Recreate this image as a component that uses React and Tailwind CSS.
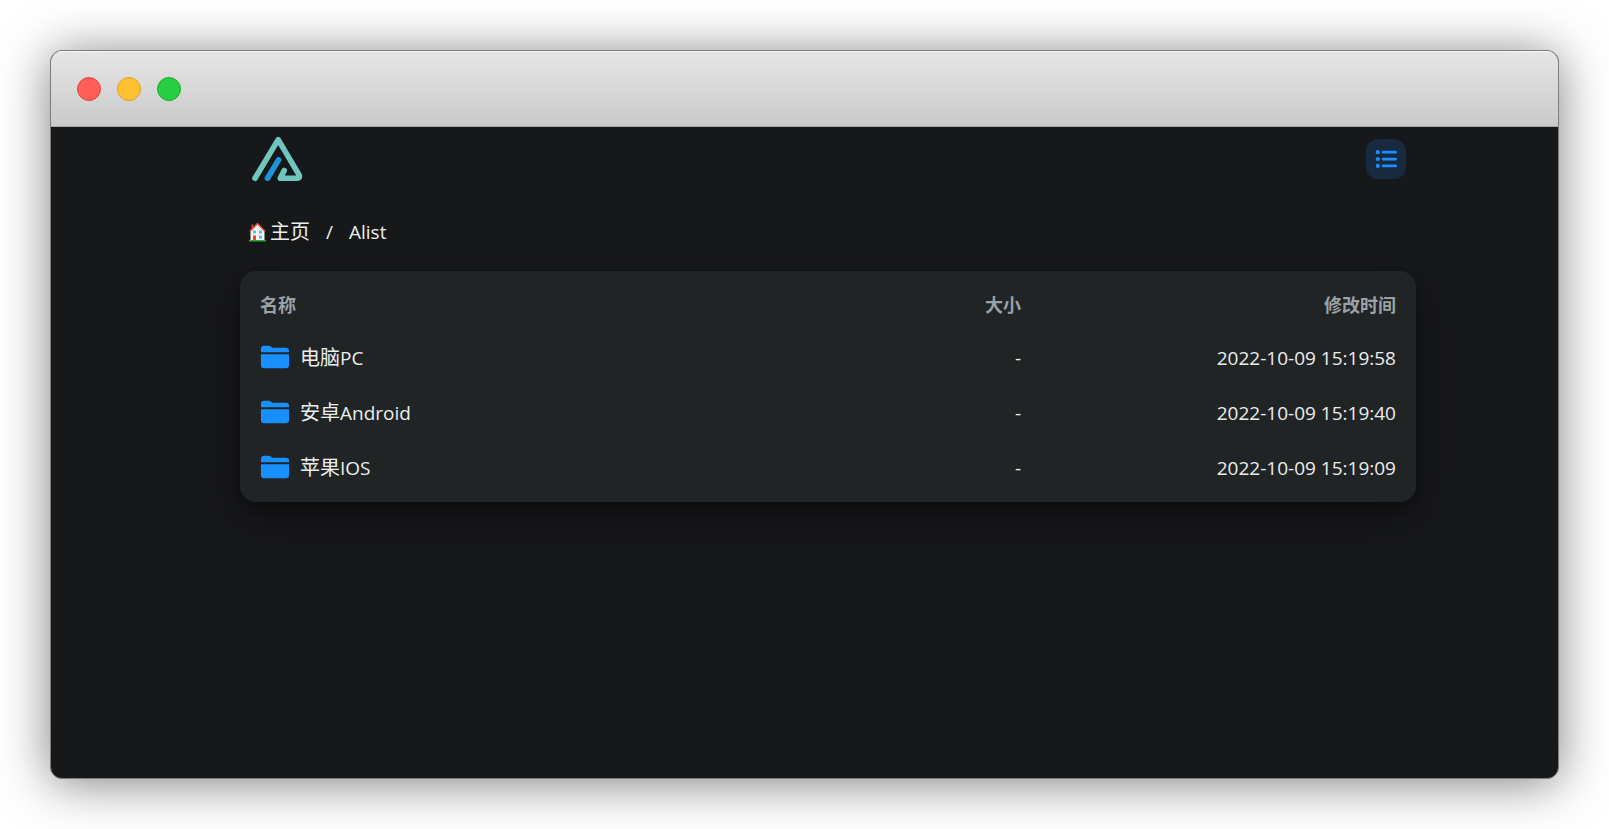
import { FaListUl } from 'react-icons/fa6';
import { IoFolder } from 'react-icons/io5';

const files = [
  { zh: '电脑', en: 'PC', size: '-', modified: '2022-10-09 15:19:58' },
  { zh: '安卓', en: 'Android', size: '-', modified: '2022-10-09 15:19:40' },
  { zh: '苹果', en: 'IOS', size: '-', modified: '2022-10-09 15:19:09' },
];

function Logo() {
  return (
    <svg width="54" height="46" viewBox="0 0 54 46" fill="none" strokeWidth="5.6" strokeLinecap="round" strokeLinejoin="round">
      <path d="M5 42.2L28.200 3.600L49.2 39.2Q50.2 42.2 47.300 42.2H30.300L34.200 34.400" stroke="#70c6be" />
      <path d="M17.5 42.2L28.6 23.900" stroke="#1b96dc" />
    </svg>
  );
}

function House() {
  return (
    <svg width="19" height="20" viewBox="0 0 19 20">
      <path d="M3.5 2.5h2v4h-2z" fill="#b8452c" />
      <path d="M2.500 9L9.5 2l7 7V19h-14z" fill="#f3f1f1" />
      <path d="M1.800 9.500L9.500 1.500l7.700 8" fill="none" stroke="#e8543a" strokeWidth="1.500" />
      <path d="M5 8.500h3v3H5zM11 8.500h3v3h-3zM11 13.500h3v3h-3z" fill="#4cc2f1" />
      <path d="M5 13.500h3V19H5z" fill="#e8462c" />
      <path d="M1 18h17v1.500H1z" fill="#2fa836" />
    </svg>
  );
}

function TitleBar() {
  return (
    <div className="flex h-19 items-center gap-4 border-b border-[#a9a9a9] bg-linear-to-b from-[#e6e6e6] to-[#cacaca] px-[26px] shadow-[inset_0_1px_0_#f5f5f5]">
      <span className="size-6 rounded-full border border-[#e2463f] bg-[#ff5f57]" />
      <span className="size-6 rounded-full border border-[#d9a02c] bg-[#ffc130]" />
      <span className="size-6 rounded-full border border-[#1dad2b] bg-[#28ce42]" />
    </div>
  );
}

function FileTable() {
  return (
    <div className="rounded-2xl bg-[#202425] px-5 py-2 shadow-[0_5px_10px_rgba(0,0,0,0.2),0_15px_40px_rgba(0,0,0,0.4)]">
      <table className="w-full table-fixed">
        <thead>
          <tr className="h-[50px] text-lg font-bold text-[#9ba1a6]">
            <th scope="col" className="w-1/2 pt-0.5 text-left">名称</th>
            <th scope="col" className="w-[17%] pt-0.5 text-right">大小</th>
            <th scope="col" className="w-[33%] pt-0.5 text-right">修改时间</th>
          </tr>
        </thead>
        <tbody>
          {files.map((file) => (
            <tr key={file.en} className="h-[55px]">
              <td>
                <a href="#" className="flex items-center gap-[10px]">
                  <IoFolder size={30} className="shrink-0 text-[#1890ff]" />
                  <span className="pt-1">
                    <span className="text-xl">{file.zh}</span>
                    {file.en}
                  </span>
                </a>
              </td>
              <td className="pt-1 text-right">{file.size}</td>
              <td className="pt-1 text-right">{file.modified}</td>
            </tr>
          ))}
        </tbody>
      </table>
    </div>
  );
}

export default function App() {
  return (
    <div className="flex min-h-screen flex-col bg-white p-[50px] font-['Open_Sans','Noto_Sans_CJK_SC',sans-serif]">
      <div className="flex flex-1 flex-col overflow-hidden rounded-xl border border-[#7d7d7d] bg-[#17181a] text-[19px] text-[#ecedee] shadow-[0_4px_50px_rgba(0,0,0,0.5)]">
        <TitleBar />
        <div className="pr-[142px] pl-[189px]">
          <header className="flex h-16 items-center justify-between px-[10px]">
            <a href="#" aria-label="Alist">
              <Logo />
            </a>
            <button
              type="button"
              aria-label="List view"
              className="grid size-10 place-items-center rounded-xl bg-[#182a3e] text-[#1890ff]"
            >
              <FaListUl size={22} />
            </button>
          </header>
          <nav className="flex h-20 items-center gap-4 px-2 pt-0.5">
            <a href="#" className="flex items-center gap-[3px] text-xl">
              <House />
              主页
            </a>
            <span>/</span>
            <a href="#">Alist</a>
          </nav>
          <FileTable />
        </div>
      </div>
    </div>
  );
}
